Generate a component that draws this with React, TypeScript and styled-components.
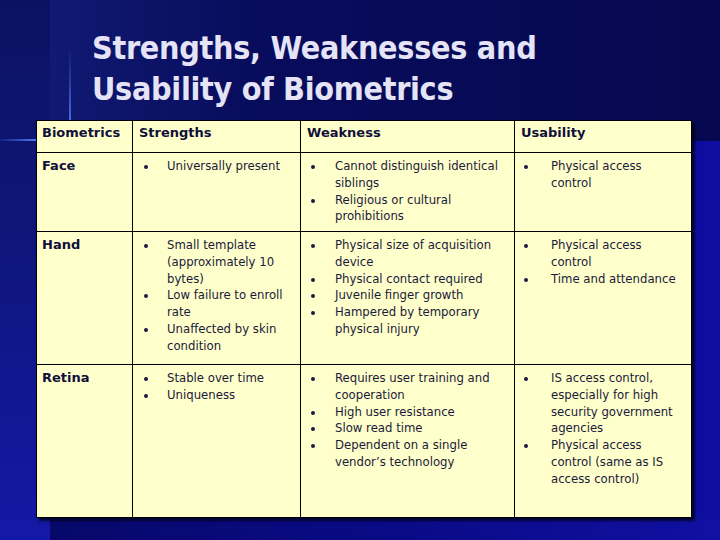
import React from "react";
import styled, { createGlobalStyle } from "styled-components";

const Global = createGlobalStyle`
  html, body { margin: 0; padding: 0; }
  body { width: 720px; height: 540px; overflow: hidden; background: #0c0c9a; }
`;

const FONT = `"DejaVu Sans Condensed", "DejaVu Sans", Tahoma, sans-serif`;
const BOLD_FONT = `"DejaVu Sans", Tahoma, sans-serif`;

const Slide = styled.div`
  position: relative;
  width: 720px;
  height: 540px;
  box-sizing: border-box;
  padding: 28px 0 0 36px;
  overflow: hidden;
  background:
    linear-gradient(to bottom, #0b1262 0%, #0e1678 40%, #1418a6 100%) 0 0 / 50px 540px no-repeat,
    linear-gradient(to right, #101a72 0%, #080c5c 30%, #06084f 100%) 50px 0 / 670px 141px no-repeat,
    linear-gradient(to right, #07086a 0%, #0a0a86 50%, #1010a2 100%) 50px 519px / 670px 21px no-repeat,
    #0d0da0;
  font-family: ${FONT};
`;

const GlowV = styled.span`
  position: absolute;
  left: 69px;
  top: 48px;
  width: 2px;
  height: 72px;
  background: linear-gradient(to bottom, rgba(70, 110, 230, 0) 0%, rgba(80, 120, 240, 0.85) 100%);
`;

const GlowH = styled.span`
  position: absolute;
  left: 0;
  top: 139px;
  width: 36px;
  height: 2px;
  background: linear-gradient(to right, rgba(70, 110, 230, 0.1) 0%, rgba(90, 130, 245, 0.9) 100%);
`;

const Title = styled.h1`
  margin: 0 0 10px 56px;
  font-family: ${FONT};
  font-weight: bold;
  font-size: 32px;
  line-height: 41px;
  letter-spacing: -0.3px;
  color: #e4e4f6;
  position: relative;
`;

const Table = styled.table`
  position: relative;
  border-collapse: collapse;
  width: 655px;
  table-layout: fixed;
  background: #ffffcc;
  box-shadow: 3px 3px 2px rgba(0, 0, 20, 0.75);
  border: 1px solid #000;
  font-family: ${FONT};
  font-size: 13px;
  line-height: 16.75px;
  color: #1a1a3a;
`;

const Col = styled.col<{ $w: number }>`
  width: ${(p) => p.$w}px;
`;

const Row = styled.tr<{ $h: number }>`
  height: ${(p) => p.$h}px;
`;

const HeadCell = styled.th<{ $pl: number }>`
  text-align: left;
  vertical-align: top;
  border: 1px solid #000;
  padding: 4px 2px 0 ${(p) => p.$pl}px;
  font-family: ${BOLD_FONT};
  font-weight: bold;
  color: #10103a;
  white-space: nowrap;
  overflow: hidden;
`;

const LabelCell = styled.td`
  vertical-align: top;
  border: 1px solid #000;
  padding: 5px 4px 0 5px;
  font-family: ${BOLD_FONT};
  font-weight: bold;
  color: #10103a;
`;

const ListCell = styled.td`
  vertical-align: top;
  border: 1px solid #000;
  padding: 5px 0 0 0;
`;

const Items = styled.ul<{ $dot: number; $text: number }>`
  list-style: none;
  margin: 0;
  padding: 0 0 0 ${(p) => p.$text}px;
  & > li { position: relative; white-space: nowrap; }
  & > li::before {
    content: "";
    position: absolute;
    left: ${(p) => p.$dot - p.$text}px;
    top: 7px;
    width: 4px;
    height: 4px;
    border-radius: 50%;
    background: #1a1a44;
  }
`;

type Item = string[];

const List = ({ items, dot, text }: { items: Item[]; dot: number; text: number }) => (
  <Items $dot={dot} $text={text}>
    {items.map((lines, i) => (
      <li key={i}>
        {lines.map((l, j) => (
          <React.Fragment key={j}>
            {j > 0 && <br />}
            {l}
          </React.Fragment>
        ))}
      </li>
    ))}
  </Items>
);

const rows: { name: string; h: number; s: Item[]; w: Item[]; u: Item[] }[] = [
  {
    name: "Face",
    h: 79,
    s: [["Universally present"]],
    w: [
      ["Cannot distinguish identical", "siblings"],
      ["Religious or cultural", "prohibitions"],
    ],
    u: [["Physical access", "control"]],
  },
  {
    name: "Hand",
    h: 133,
    s: [
      ["Small template", "(approximately 10", "bytes)"],
      ["Low failure to enroll", "rate"],
      ["Unaffected by skin", "condition"],
    ],
    w: [
      ["Physical size of acquisition", "device"],
      ["Physical contact required"],
      ["Juvenile finger growth"],
      ["Hampered by temporary", "physical injury"],
    ],
    u: [["Physical access", "control"], ["Time and attendance"]],
  },
  {
    name: "Retina",
    h: 153,
    s: [["Stable over time"], ["Uniqueness"]],
    w: [
      ["Requires user training and", "cooperation"],
      ["High user resistance"],
      ["Slow read time"],
      ["Dependent on a single", "vendor\u2019s technology"],
    ],
    u: [
      ["IS access control,", "especially for high", "security government", "agencies"],
      ["Physical access", "control (same as IS", "access control)"],
    ],
  },
];

export default function App() {
  return (
    <>
      <Global />
      <Slide>
        <GlowV />
        <GlowH />
        <Title>
          Strengths, Weaknesses and
          <br />
          Usability of Biometrics
        </Title>
        <Table>
          <colgroup>
            <Col $w={96} />
            <Col $w={168} />
            <Col $w={214} />
            <Col $w={177} />
          </colgroup>
          <thead>
            <Row $h={32}>
              <HeadCell $pl={5}>Biometrics</HeadCell>
              <HeadCell $pl={6}>Strengths</HeadCell>
              <HeadCell $pl={6}>Weakness</HeadCell>
              <HeadCell $pl={6}>Usability</HeadCell>
            </Row>
          </thead>
          <tbody>
            {rows.map((r) => (
              <Row key={r.name} $h={r.h}>
                <LabelCell>{r.name}</LabelCell>
                <ListCell>
                  <List items={r.s} dot={11} text={34} />
                </ListCell>
                <ListCell>
                  <List items={r.w} dot={10} text={34} />
                </ListCell>
                <ListCell>
                  <List items={r.u} dot={9} text={36} />
                </ListCell>
              </Row>
            ))}
          </tbody>
        </Table>
      </Slide>
    </>
  );
}
